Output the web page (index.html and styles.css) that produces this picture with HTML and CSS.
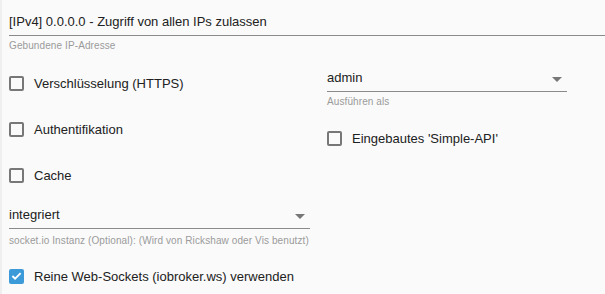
FILE: index.html
```html
<!DOCTYPE html>
<html lang="de">
<head>
    <meta charset="UTF-8">
    <title>Web-Adapter Einstellungen</title>
    <link rel="stylesheet" href="styles.css">
</head>
<body>
    <div class="page">
        <div class="field field-wide">
            <div class="field-value">[IPv4] 0.0.0.0 - Zugriff von allen IPs zulassen</div>
            <div class="field-help">Gebundene IP-Adresse</div>
        </div>

        <div class="columns">
            <div class="col col-left">
                <label class="check"><span class="box"></span>Verschlüsselung (HTTPS)</label>
                <label class="check"><span class="box"></span>Authentifikation</label>
                <label class="check"><span class="box"></span>Cache</label>

                <div class="field select select-left">
                    <div class="field-value">integriert<span class="arrow"></span></div>
                    <div class="field-help">socket.io Instanz (Optional): (Wird von Rickshaw oder Vis benutzt)</div>
                </div>

                <label class="check check-last">
                    <span class="box checked">
                        <svg width="12" height="10" viewBox="0 0 12 10"><path d="M1.5 5 L4.5 8 L10.5 1.8" fill="none" stroke="#fff" stroke-width="2"/></svg>
                    </span>Reine Web-Sockets (iobroker.ws) verwenden
                </label>
            </div>

            <div class="col col-right">
                <div class="field select select-right">
                    <div class="field-value">admin<span class="arrow"></span></div>
                    <div class="field-help">Ausführen als</div>
                </div>
                <label class="check check-right"><span class="box"></span>Eingebautes 'Simple-API'</label>
            </div>
        </div>
    </div>
</body>
</html>
```

FILE: styles.css
```css
/* settings form */
html, body { margin: 0; height: 100%; }
body { font-family: "Liberation Sans", Arial, sans-serif; background: #fafafa; color: #212121; overflow: hidden; }
.page { border-left: 2px solid #efefef; padding-left: 7px; height: 100%; box-sizing: border-box; }

.field-value { font-size: 13px; line-height: 20px; border-bottom: 1px solid #8a8a8a; position: relative; white-space: nowrap; }
.field-help { font-size: 10px; line-height: 12px; letter-spacing: 0.1px; color: #9a9a9a; white-space: nowrap; }

.field-wide { padding-top: 12px; }
.field-wide .field-value { padding-bottom: 3px; }
.field-wide .field-help { margin-top: 4px; }

.columns { display: grid; grid-template-columns: 301px 240px; column-gap: 17px; margin-top: 8px; }
.col { display: flex; flex-direction: column; }

.check { display: flex; align-items: center; height: 46px; font-size: 13px; cursor: pointer; }
.box { width: 11px; height: 11px; border: 2px solid #777; border-radius: 2px; margin-right: 10px; display: flex; align-items: center; justify-content: center; }
.box.checked { background: #3d9ad9; border-color: #3d9ad9; }

.select .field-value { padding-bottom: 3px; }
.arrow { position: absolute; right: 5px; top: 9px; border-left: 5px solid transparent; border-right: 5px solid transparent; border-top: 5px solid #777; }

.select-left { padding-top: 7px; }
.select-left .field-help { margin-top: 6px; }
.check-last { margin-top: 6px; }

.select-right { padding-top: 8px; }
.select-right .field-help { margin-top: 4px; }
.check-right { margin-top: 7px; }
```
